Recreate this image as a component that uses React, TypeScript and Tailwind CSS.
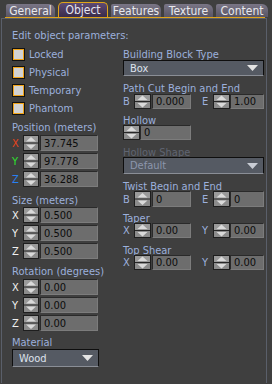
const font = "[font-family:'DejaVu_Sans_Condensed','DejaVu_Sans',sans-serif] [font-stretch:condensed] whitespace-nowrap";

const Spin = ({ w, h }: { w: number; h: number }) => {
  const m = h / 2;
  const c = w / 2;
  return (
    <svg width={w} height={h} className="block shrink-0">
      <rect x={0.5} y={0.5} width={w - 1} height={h - 1} fill="#8c8c8c" stroke="#1e1e1e" />
      <rect x={1} y={1} width={w - 2} height={m - 1.5} fill="#9a9a9a" />
      <line x1={1} x2={w - 1} y1={m} y2={m} stroke="#262626" />
      <polygon points={`${c - 5},${m - 1.5} ${c + 5},${m - 1.5} ${c},${m - 6}`} fill="#dadada" />
      <polygon points={`${c - 5},${m + 1.5} ${c + 5},${m + 1.5} ${c},${m + 6}`} fill="#dadada" />
    </svg>
  );
};

const Field = ({ value, className }: { value: string; className: string }) => (
  <div
    className={`flex items-center bg-[#6d6d6d] border border-t-[#2a2a2a] border-l-[#2a2a2a] border-r-[#7c7c7c] border-b-[#7c7c7c] pl-[3px] text-[11px] leading-none text-[#0c0c0c] ${className}`}
  >
    {value}
  </div>
);

const Check = ({ label }: { label: string }) => (
  <div className="flex items-center h-[14px]">
    <div className="w-[13px] h-[13px] border border-[#111] bg-[#f0a41a] p-px shrink-0">
      <div className="w-[9px] h-[9px] bg-[#d2d2d2]" />
    </div>
    <span className="ml-[4px] text-[11px] leading-none text-[#9cb0dc]">{label}</span>
  </div>
);

const Drop = ({ value, className, disabled }: { value: string; className: string; disabled?: boolean }) => (
  <div
    className={`flex items-center justify-between bg-[#555a63] border border-[#0e0e0e] border-b-[#8a8e96] pl-[6px] pr-[5px] text-[11px] leading-none ${
      disabled ? 'text-[#8c96ac]' : 'text-[#dde2ec]'
    } ${className}`}
  >
    <span>{value}</span>
    <svg width="11" height="6" className="block">
      <polygon points="0,0 11,0 5.5,6" fill={disabled ? '#c8ccd4' : '#e4e4e4'} />
    </svg>
  </div>
);

const Row = ({ axis, color, value }: { axis: string; color: string; value: string }) => (
  <div className="flex items-center h-[16px]">
    <span className={`w-[11px] text-[11px] leading-none ${color}`}>{axis}</span>
    <Spin w={16} h={16} />
    <Field value={value} className="ml-px w-[58px] h-[16px]" />
  </div>
);

const Pair = ({ a, av, b, bv, h }: { a: string; av: string; b: string; bv: string; h: number }) => (
  <div className="flex items-center">
    <span className="w-[11px] text-[11px] leading-none text-[#9cb0dc]">{a}</span>
    <Spin w={17} h={h} />
    <Field value={av} className={`ml-px w-[39px] ${h === 16 ? 'h-[16px]' : 'h-[15px]'}`} />
    <span className="ml-[11px] w-[11px] text-[11px] leading-none text-[#9cb0dc]">{b}</span>
    <Spin w={17} h={h} />
    <Field value={bv} className={`w-[34px] ${h === 16 ? 'h-[16px]' : 'h-[15px]'}`} />
  </div>
);

const Tab = ({ label, w, active }: { label: string; w: string; active?: boolean }) =>
  active ? (
    <div
      className={`${w} h-[15px] flex items-center justify-center rounded-t-[5px] border border-b-0 border-[#e0a418] bg-gradient-to-b from-[#5e4a74] to-[#3a2c4a] text-[12px] leading-none text-[#e6e4ee]`}
    >
      {label}
    </div>
  ) : (
    <div
      className={`${w} h-[13px] flex items-center justify-center rounded-tl-[2px] rounded-tr-[6px] bg-gradient-to-b from-[#7a7686] to-[#595565] text-[12px] leading-none text-[#e8e8ec]`}
    >
      {label}
    </div>
  );

export default function App() {
  return (
    <div className={`w-[272px] h-[384px] bg-[#3f3f3f] overflow-hidden ${font}`}>
      <div className="h-[17px] flex items-end pl-[6px] gap-[3px]">
        <Tab label="General" w="w-[49px]" />
        <Tab label="Object" w="w-[50px]" active />
        <Tab label="Features" w="w-[50px]" />
        <Tab label="Texture" w="w-[49px]" />
        <Tab label="Content" w="w-[52px]" />
      </div>
      <div className="ml-[5px] w-[260px] h-px bg-[#e0a418]" />
      <div className="h-[365px] ml-px w-[266px] border-t border-l border-r border-[#5a5f6a] flex">
        <div className="ml-[10px] w-[90px] flex flex-col">
          <div className="mt-[10px] text-[11px] leading-[13px] text-[#9cb0dc]">Edit object parameters:</div>
          <div className="mt-[5px] flex flex-col gap-[4px]">
            <Check label="Locked" />
            <Check label="Physical" />
            <Check label="Temporary" />
            <Check label="Phantom" />
          </div>
          <div className="mt-[6px] text-[11px] leading-[13px] text-[#9cb0dc]">Position (meters)</div>
          <div className="mt-px flex flex-col gap-[2px]">
            <Row axis="X" color="text-[#e8441c]" value="37.745" />
            <Row axis="Y" color="text-[#2ee02e]" value="97.778" />
            <Row axis="Z" color="text-[#2a80f2]" value="36.288" />
          </div>
          <div className="mt-[7px] text-[11px] leading-[13px] text-[#9cb0dc]">Size (meters)</div>
          <div className="flex flex-col gap-[2px]">
            <Row axis="X" color="text-[#f0f0f0]" value="0.500" />
            <Row axis="Y" color="text-[#f0f0f0]" value="0.500" />
            <Row axis="Z" color="text-[#f0f0f0]" value="0.500" />
          </div>
          <div className="mt-[6px] text-[11px] leading-[13px] text-[#9cb0dc]">Rotation (degrees)</div>
          <div className="mt-px flex flex-col gap-[2px]">
            <Row axis="X" color="text-[#f0f0f0]" value="0.00" />
            <Row axis="Y" color="text-[#f0f0f0]" value="0.00" />
            <Row axis="Z" color="text-[#f0f0f0]" value="0.00" />
          </div>
          <div className="mt-[6px] text-[11px] leading-[12px] text-[#9cb0dc]">Material</div>
          <Drop value="Wood" className="w-[87px] h-[18px]" />
        </div>
        <div className="ml-[21px] w-[141px] flex flex-col">
          <div className="mt-[30px] text-[11px] leading-[11px] text-[#9cb0dc]">Building Block Type</div>
          <Drop value="Box" className="w-[141px] h-[16px]" />
          <div className="mt-[7px] text-[11px] leading-[11px] text-[#9cb0dc]">Path Cut Begin and End</div>
          <Pair a="B" av="0.000" b="E" bv="1.00" h={15} />
          <div className="mt-[6px] text-[11px] leading-[11px] text-[#9cb0dc]">Hollow</div>
          <div className="-mt-px flex items-center">
            <Spin w={17} h={15} />
            <Field value="0" className="w-[51px] h-[15px]" />
          </div>
          <div className="mt-[7px] text-[11px] leading-[11px] text-[#5f6572]">Hollow Shape</div>
          <Drop value="Default" className="-mt-px w-[141px] h-[17px]" disabled />
          <div className="mt-[7px] text-[11px] leading-[11px] text-[#9cb0dc]">Twist Begin and End</div>
          <div className="-mt-px">
            <Pair a="B" av="0" b="E" bv="0" h={16} />
          </div>
          <div className="mt-[6px] text-[11px] leading-[11px] text-[#9cb0dc]">Taper</div>
          <div className="-mt-px">
            <Pair a="X" av="0.00" b="Y" bv="0.00" h={15} />
          </div>
          <div className="mt-[7px] text-[11px] leading-[11px] text-[#9cb0dc]">Top Shear</div>
          <div className="-mt-px">
            <Pair a="X" av="0.00" b="Y" bv="0.00" h={15} />
          </div>
        </div>
      </div>
    </div>
  );
}
